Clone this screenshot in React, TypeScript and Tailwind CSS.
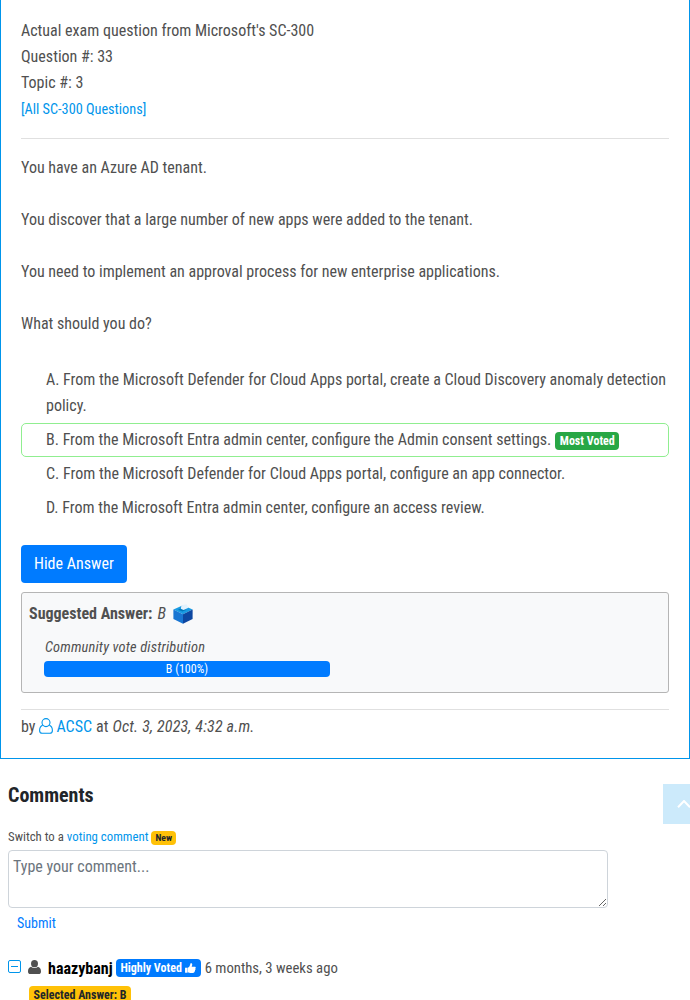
import React from "react";

const options = [
  { letter: "A", text: "From the Microsoft Defender for Cloud Apps portal, create a Cloud Discovery anomaly detection policy." },
  { letter: "B", text: "From the Microsoft Entra admin center, configure the Admin consent settings.", voted: true },
  { letter: "C", text: "From the Microsoft Defender for Cloud Apps portal, configure an app connector." },
  { letter: "D", text: "From the Microsoft Entra admin center, configure an access review." },
];

function BallotIcon() {
  return (
    <svg width="20" height="20" viewBox="0 0 20 20" className="mb-[1px] ml-[7px] shrink-0">
      <path d="M0.400 5.500 10 1.300 19.600 5.500 10 10.300z" fill="#199be2" />
      <path d="M0.400 5.500 10 10.300V19.800L0.400 15z" fill="#1976d2" />
      <path d="M19.600 5.500 10 10.300V19.800l9.600-4.800z" fill="#0d47a1" />
      <path d="M5 5.800 7.500 4.600 13.500 5.800 9.500 7.600z" fill="#0277bd" />
      <path d="M7.800 4.800 8.500 1.300 13.500 .3 15.500 3.800 10.500 6z" fill="#e3f2fd" />
    </svg>
  );
}

function UserOutline() {
  return (
    <svg width="14" height="16" viewBox="0 0 14 16" fill="none" stroke="#0095eb" strokeWidth="1.1" className="ml-1 mr-[3px] mb-[2px] shrink-0">
      <circle cx="7" cy="4.600" r="4" />
      <path d="M3.700 7.200C1.600 8 .6 10 .6 12.400c0 1.700 1 2.800 2.600 2.800h7.600c1.600 0 2.600-1.100 2.600-2.800 0-2.400-1-4.400-3.100-5.200" />
    </svg>
  );
}

function UserSolid() {
  return (
    <svg width="13" height="14" viewBox="0 0 12 13" preserveAspectRatio="none" fill="#505050" className="mb-[5px] ml-[7px] shrink-0">
      <ellipse cx="6" cy="3.400" rx="3.200" ry="3.400" />
      <path d="M2.800 6.200C.8 6.700 0 8.400 0 10.600 0 12.200.9 13 2.200 13h7.600c1.300 0 2.200-.8 2.200-2.400 0-2.200-.8-3.900-2.800-4.400-.8.8-2 1.300-3.200 1.300s-2.400-.5-3.200-1.300z" />
    </svg>
  );
}

function ThumbIcon() {
  return (
    <svg width="11" height="10" viewBox="0 0 12 11" fill="#fff" className="mb-[1px] ml-[3px] shrink-0">
      <path d="M0 5.200h2.700V10.700H0z" />
      <path d="M2.900 5.200C4.500 4.700 5 3.500 5.500 2.200L6 .3C7.500-.2 8.300 1 7.700 2.700L7.300 4h3.200c1.300 0 1.700 1.300.8 2 .5.8.2 1.600-.4 2 .2.8-.1 1.400-.6 1.700 0 .8-.5 1.300-1.500 1.300H6.500c-1.300 0-2.300-.6-3.600-.8z" />
    </svg>
  );
}

export default function App() {
  return (
    <div className="h-[1000px] w-[690px] overflow-hidden bg-white text-base leading-[26px] text-[#505050] [font-family:'Roboto_Condensed',Roboto,sans-serif] font-stretch-condensed">
      <main className="h-[759px] border border-t-0 border-[#0095eb] px-5 pt-[18px]">
        <div>Actual exam question from Microsoft's SC-300</div>
        <div>Question #: 33</div>
        <div>Topic #: 3</div>
        <a className="block text-[14.25px] leading-[26px] text-[#0095eb]">[All SC-300 Questions]</a>
        <hr className="mt-4 border-[#e0e0e0]" />
        <div className="mt-4 flex flex-col gap-[26px]">
          <p>You have an Azure AD tenant.</p>
          <p>You discover that a large number of new apps were added to the tenant.</p>
          <p>You need to implement an approval process for new enterprise applications.</p>
          <p>What should you do?</p>
        </div>
        <ul className="mt-[26px]">
          {options.map((o) => (
            <li
              key={o.letter}
              className={
                o.voted
                  ? "rounded-[5px] border border-[#90ee90] py-[3px] pl-6"
                  : "border border-transparent py-[3px] pl-6"
              }
            >
              {`${o.letter}. ${o.text}`}
              {o.voted && (
                <span className="ml-1 inline-block rounded bg-[#28a745] px-[4.5px] py-[3px] align-baseline text-xs leading-3 font-bold text-white">
                  Most Voted
                </span>
              )}
            </li>
          ))}
        </ul>
        <button className="mt-5 block h-[38px] rounded bg-[#007bff] px-[13px] text-base leading-6 text-white">Hide Answer</button>
        <section className="mt-[9px] h-[101px] rounded-[3px] border border-[#b5b5b5] bg-[#f8f9fa] px-[7px] pt-2">
          <div className="flex items-center">
            <strong className="font-bold">Suggested Answer:</strong>
            <em className="ml-[5px]">B</em>
            <BallotIcon />
          </div>
          <div className="mt-2 ml-4 text-[14.4px] leading-[26px] tracking-[0.17px] italic">Community vote distribution</div>
          <div className="ml-[15px] h-4 w-[286px] rounded bg-[#007bff] text-center text-xs leading-4 text-white">B (100%)</div>
        </section>
        <hr className="mt-4 border-[#e0e0e0]" />
        <div className="mt-1 flex items-center">
          <span>by</span>
          <UserOutline />
          <a className="text-[#0095eb]">ACSC</a>
          <span className="ml-1">at</span>
          <em className="ml-1 tracking-[0.17px]">Oct. 3, 2023, 4:32 a.m.</em>
        </div>
      </main>

      <div className="flex items-start justify-between pt-[23px] pl-2">
        <h2 className="text-xl leading-[26px] font-bold text-[#212529]">Comments</h2>
        <button className="mt-[2px] flex h-10 w-[27px] items-center overflow-hidden bg-[#cceafb] pl-[14px]">
          <svg width="14" height="8" viewBox="0 0 14 8" fill="none" stroke="#fff" strokeWidth="2" className="shrink-0">
            <path d="M1 7.200 7 1l6 6.200" />
          </svg>
        </button>
      </div>
      <div className="pl-2">
        <div className="flex h-[26px] items-center text-[12.8px]">
          <span>Switch to a</span>
          <a className="ml-[3px] text-[#0095eb]">voting comment</a>
          <span className="mt-[2px] ml-[3px] h-[14px] rounded bg-[#ffc107] px-1 text-[9.6px] leading-[14px] font-bold text-[#212529]">New</span>
        </div>
        <textarea
          placeholder="Type your comment..."
          className="block h-[58px] w-[600px] rounded border border-[#ced4da] px-1 py-1 text-base leading-6 placeholder:text-[#6c757d]"
        />
        <button className="ml-[9px] block h-[30px] text-sm leading-[30px] text-[#007bff]">Submit</button>
      </div>
      <div className="mt-[18px] pl-2">
        <div className="flex h-[26px] items-center text-[14.72px]">
          <svg width="13" height="13" viewBox="0 0 13 13" fill="none" stroke="#0095eb" className="mb-[5px] shrink-0">
            <rect x=".5" y=".5" width="12" height="12" rx="1.500" />
            <path d="M3 6.500h7" />
          </svg>
          <UserSolid />
          <strong className="ml-[7px] text-base font-bold text-black">haazybanj</strong>
          <span className="mb-[2px] ml-[3px] flex h-[18px] items-center rounded bg-[#007bff] px-[4.8px] text-xs leading-[18px] font-bold text-white">
            Highly Voted
            <ThumbIcon />
          </span>
          <span className="mb-[2px] ml-1">6 months, 3 weeks ago</span>
        </div>
        <div className="mt-1 ml-[21px] h-[18px] w-fit rounded bg-[#ffc107] px-[4.6px] text-xs leading-[18px] font-bold text-[#212529]">Selected Answer: B</div>
      </div>
    </div>
  );
}
